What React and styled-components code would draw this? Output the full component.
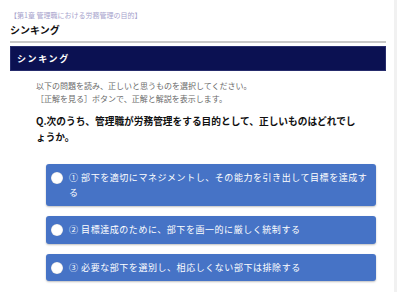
import React from 'react';
import styled, { createGlobalStyle } from 'styled-components';

const GlobalStyle = createGlobalStyle`
  html, body {
    margin: 0;
    padding: 0;
    background: #ffffff;
  }
  body {
    font-family: 'Noto Sans CJK JP', 'Noto Sans', sans-serif;
  }
`;

const Page = styled.div`
  width: 397px;
  min-height: 292px;
  box-sizing: border-box;
  padding: 10px 8px 0 10px;
  border-right: 3px solid #f1f1f1;
`;

const Breadcrumb = styled.div`
  font-size: 7px;
  line-height: 10px;
  color: #a6a2cc;
  margin-bottom: 3px;
`;

const Title = styled.h2`
  margin: 0;
  font-size: 10px;
  line-height: 14px;
  font-weight: 700;
  color: #111;
  padding-bottom: 4px;
  border-bottom: 2px solid #c8c8c8;
`;

const SectionBar = styled.div`
  margin-top: 3px;
  height: 25px;
  box-sizing: border-box;
  background: #0b1152;
  border: 1px solid #262c6c;
  display: flex;
  align-items: center;
  padding-left: 6px;
  color: #ffffff;
  font-size: 9px;
  font-weight: 700;
  letter-spacing: 1.6px;
`;

const Body = styled.div`
  padding: 8px 27px 0 26px;
`;

const Lead = styled.p`
  margin: 0;
  font-size: 8px;
  line-height: 13px;
  color: #6a6a6a;
`;

const Question = styled.p`
  margin: 8px 0 0;
  font-size: 9.7px;
  line-height: 16px;
  font-weight: 700;
  color: #111;
`;

const Choices = styled.div`
  display: flex;
  flex-direction: column;
  gap: 10px;
  padding: 19px 10px 0 36px;
`;

const Choice = styled.label`
  display: flex;
  align-items: flex-start;
  gap: 6px;
  padding: 7px 2px 6px 5px;
  background: #4673c6;
  border-radius: 3px;
  box-shadow: 0 1px 2px rgba(0, 0, 0, 0.25);
  color: #ffffff;
  cursor: pointer;
`;

const Radio = styled.span`
  flex: 0 0 12px;
  width: 12px;
  height: 12px;
  margin-top: 1px;
  border-radius: 50%;
  background: #ffffff;
  box-shadow: inset 0 0 1px rgba(0, 0, 0, 0.3);
`;

const ChoiceText = styled.span`
  font-size: 9px;
  line-height: 14.5px;
  letter-spacing: 0.55px;
`;

const choices = [
  '① 部下を適切にマネジメントし、その能力を引き出して目標を達成する',
  '② 目標達成のために、部下を画一的に厳しく統制する',
  '③ 必要な部下を選別し、相応しくない部下は排除する',
];

const App = () => (
  <>
    <GlobalStyle />
    <Page>
      <Breadcrumb>【第1章 管理職における労務管理の目的】</Breadcrumb>
      <Title>シンキング</Title>
      <SectionBar>シンキング</SectionBar>
      <Body>
        <Lead>
          以下の問題を読み、正しいと思うものを選択してください。
          <br />
          ［正解を見る］ボタンで、正解と解説を表示します。
        </Lead>
        <Question>
          Q.次のうち、管理職が労務管理をする目的として、正しいものはどれでしょうか。
        </Question>
      </Body>
      <Choices>
        {choices.map((text) => (
          <Choice key={text}>
            <Radio />
            <ChoiceText>{text}</ChoiceText>
          </Choice>
        ))}
      </Choices>
    </Page>
  </>
);

export default App;
